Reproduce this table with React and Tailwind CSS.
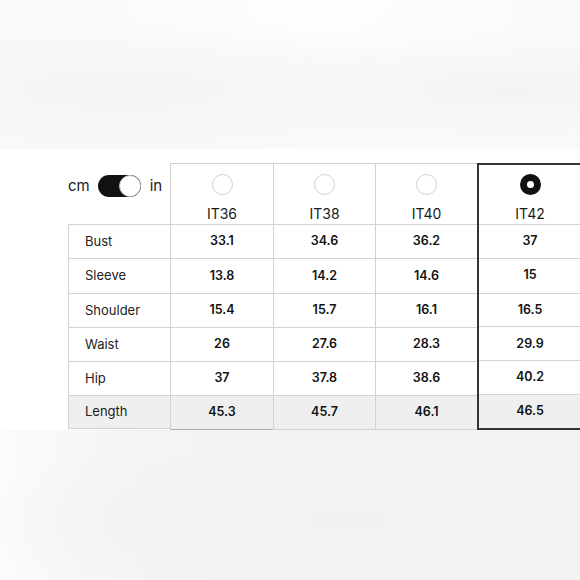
import React from "react";

const sizes = ["IT36", "IT38", "IT40", "IT42"];
const rows = [
  ["Bust", ["33.1", "34.6", "36.2", "37"]],
  ["Sleeve", ["13.8", "14.2", "14.6", "15"]],
  ["Shoulder", ["15.4", "15.7", "16.1", "16.5"]],
  ["Waist", ["26", "27.6", "28.3", "29.9"]],
  ["Hip", ["37", "37.8", "38.6", "40.2"]],
  ["Length", ["45.3", "45.7", "46.1", "46.5"]],
];
const rowH = ["h-[34px]", "h-[35px]", "h-[34px]", "h-[34px]", "h-[34px]", "h-[34px]"];
const colW = ["w-[103px]", "w-[102px]", "w-[102px]", "w-[106px]"];

function Radio({ selected }) {
  if (selected) {
    return <div className="w-[21px] h-[21px] rounded-full border-[7px] border-[#111]" />;
  }
  return <div className="w-[21px] h-[21px] rounded-full border border-[#cfcfcf] bg-white" />;
}

function SizeColumn({ idx }) {
  const selected = idx === 3;
  const outer = selected
    ? "border-2 border-[#333]"
    : idx === 0
    ? "border-l border-t border-b border-l-[#d2d2d2] border-t-[#d2d2d2] border-b-[#b0b0b0]"
    : "border-l border-t border-b border-[#d2d2d2]";
  return (
    <div className={`shrink-0 flex flex-col ${colW[idx]} ${outer}`}>
      <div
        className={`flex flex-col items-center ${selected ? "h-[59px] pt-[9px]" : "h-[60px] pt-[10px]"}`}
      >
        <Radio selected={selected} />
        <div className="mt-[9px] text-[14px] leading-[20px] text-[#1a1a1a]">{sizes[idx]}</div>
      </div>
      {rows.map(([label, vals], r) => (
        <div
          key={label}
          className={`${rowH[r]} border-t border-[#d2d2d2] flex items-center justify-center text-[12.5px] font-semibold text-[#111] ${
            r === rows.length - 1 ? "bg-[#efefef]" : "bg-white"
          }`}
        >
          {vals[idx]}
        </div>
      ))}
    </div>
  );
}

export default function App() {
  return (
    <div
      className="w-[580px] h-[580px] overflow-hidden flex flex-col"
      style={{ fontFamily: "Inter, 'Liberation Sans', sans-serif" }}
    >
      <div className="h-[149px] shrink-0 bg-[#f9f9f9] bg-[radial-gradient(ellipse_at_21%_60%,#f4f4f4_0%,#f7f7f7_25%,transparent_55%),radial-gradient(ellipse_at_88%_60%,#f3f3f3_0%,#f7f7f7_20%,transparent_45%),radial-gradient(ellipse_at_55%_0%,#fefefe_0%,transparent_60%)]" />
      <div className="h-[281px] shrink-0 bg-white pt-[14px] pl-[68px] flex">
        <div className="w-[102px] shrink-0 flex flex-col">
          <div className="h-[61px] pt-[12px] flex items-start">
            <div className="flex items-center h-[22px] text-[15px] text-[#1a1a1a]">
              <span>cm</span>
              <div className="ml-[8px] w-[43px] h-[22px] rounded-full bg-[#111] relative">
                <div className="absolute right-0 top-0 w-[22px] h-[22px] rounded-full bg-white border border-[#bdbdbd]" />
              </div>
              <span className="ml-[9px]">in</span>
            </div>
          </div>
          {rows.map(([label], r) => (
            <div
              key={label}
              className={`${rowH[r]} border-t border-l border-[#d2d2d2] flex items-center pl-[16px] text-[13px] text-[#222] ${
                r === rows.length - 1 ? "bg-[#efefef] border-b" : "bg-white"
              }`}
            >
              {label}
            </div>
          ))}
        </div>
        {sizes.map((s, i) => (
          <SizeColumn key={s} idx={i} />
        ))}
      </div>
      <div className="flex-1 bg-[#f3f3f3] bg-[radial-gradient(ellipse_at_60%_60%,#f1f1f1_0%,#f3f3f3_40%,transparent_75%),linear-gradient(to_right,#fbfbfb_0%,#f5f5f5_20%,transparent_40%)]" />
    </div>
  );
}
